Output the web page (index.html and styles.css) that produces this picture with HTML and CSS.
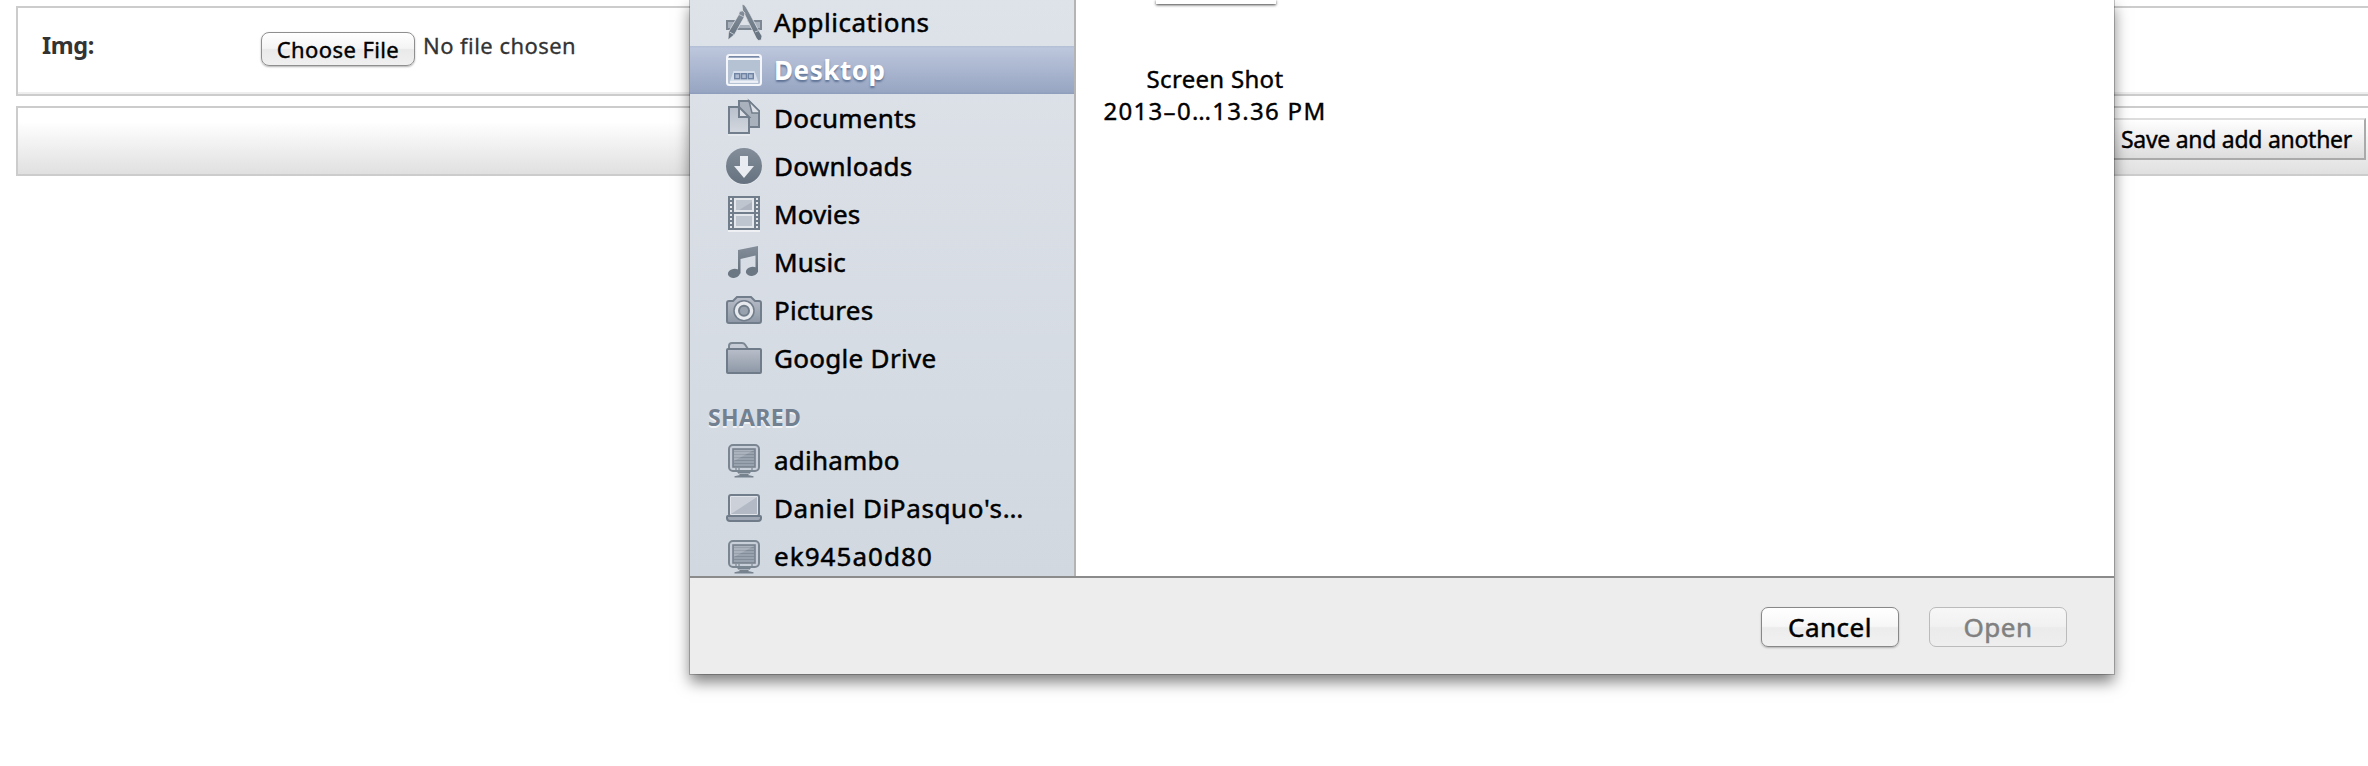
FILE: index.html
```html
<!DOCTYPE html>
<html lang="en">
<head>
<meta charset="utf-8">
<title>Add image</title>
<link rel="stylesheet" href="styles.css">
</head>
<body>
<svg class="defs" width="0" height="0" aria-hidden="true">
  <defs>
    <linearGradient id="dark" x1="0" y1="0" x2="0" y2="1"><stop offset="0" stop-color="#848e9b"/><stop offset="1" stop-color="#65717e"/></linearGradient>
    <linearGradient id="fill" x1="0" y1="0" x2="0" y2="1"><stop offset="0" stop-color="#b9bfca"/><stop offset="1" stop-color="#8d97a5"/></linearGradient>
    <linearGradient id="pale" x1="0" y1="0" x2="0" y2="1"><stop offset="0" stop-color="#b9c0cb"/><stop offset="1" stop-color="#d3d8df"/></linearGradient>
    <symbol id="monitor" viewBox="0 0 36 48">
      <rect x="3" y="9" width="30" height="26" rx="4" fill="#c9cfd8" stroke="#7b8693" stroke-width="2"/>
      <rect x="7" y="13" width="22" height="18" fill="#98a2af" stroke="#78838f" stroke-width="1.6"/>
      <path d="M8 15.500h20M8 18.500h20M8 21.500h20M8 24.500h20M8 27.500h20" stroke="#838d9a"/>
      <path d="M8 14h20L8 25z" fill="#fff" opacity=".18"/>
      <path d="M10 32v2M13 32v2M26 32v2" stroke="#7b8693" stroke-width="1.2"/>
      <path d="M11 36h14l-3 3 5.500 1.200V41.500H8.500V40.200L14 39z" fill="#77828f"/>
      <path d="M13 37.500h10" stroke="#aab2bd"/>
    </symbol>
  </defs>
</svg>

<main class="page">
  <section class="module">
    <label class="field-label">Img:</label>
    <button class="choose">Choose File</button>
    <span class="file-name">No file chosen</span>
  </section>
  <section class="submit-row">
    <button class="save">Save and add another</button>
  </section>
</main>

<div class="dialog">
  <div class="browser">
    <nav class="sidebar">
      <div class="row t-app">
        <svg class="icon" viewBox="0 0 36 48"><path d="M1 23h34v8H1z" fill="#a9b1bc" stroke="#7d8794" stroke-width="2"/><path d="M17.500 15l6 12H12z" fill="#dde1e8"/><path d="M16 6.500q2-1 4 2.500l4 7 7.500 14.500 4.500 7.500-.8 4-3 .5-2-2.500L16.500 12z" fill="url(#dark)" stroke="#e6e9ed" stroke-width=".7"/><path d="M13.500 13.500q3.500-2 5.500 1.500l-1 4.500L8.500 36.500 2 42l.5-8L12.500 17z" fill="url(#dark)" stroke="#e6e9ed" stroke-width=".7"/><path d="M13 16.500l5 2.500M3.500 34l4.500 2.500M29 34l5-2" stroke="#c3cad3"/></svg>
        <span>Applications</span>
      </div>
      <div class="row selected t-desk">
        <svg class="icon" viewBox="0 0 36 48"><rect x="1" y="9" width="34" height="30" rx="2.500" fill="#b4c2d4" stroke="#f4f6fa" stroke-width="2"/><path d="M3 10.700h30" stroke="#7688a5" stroke-width="1.400"/><path d="M2 13h32" stroke="#f4f6fa" stroke-width="2"/><path d="M7.500 25h21l4 11.500h-29z" fill="#d5deea"/><path d="M4 36h28" stroke="#f4f6fa" stroke-width="1.500"/><g fill="#aebbd0" stroke="#6f83a2" stroke-width="1.400"><rect x="8.700" y="27.700" width="5" height="5"/><rect x="15.500" y="27.700" width="5" height="5"/><rect x="22.300" y="27.700" width="5" height="5"/></g></svg>
        <span>Desktop</span>
      </div>
      <div class="row t-doc">
        <svg class="icon" viewBox="0 0 36 48"><path d="M13 7h10l10 10v16H13z" fill="#a9b1bd" stroke="#727e8b" stroke-width="2"/><path d="M23 7l10 10v2h-7z" fill="#dde1e7" stroke="#727e8b" stroke-width="1.500"/><path d="M3 13h9l11 11v15H3z" fill="url(#pale)" stroke="#727e8b" stroke-width="2"/><path d="M13 13v10h10z" fill="#dde1e7" stroke="#727e8b" stroke-width="2"/><path d="M2 41h22" stroke="#f0f2f5"/></svg>
        <span>Documents</span>
      </div>
      <div class="row t-down">
        <svg class="icon" viewBox="0 0 36 48"><circle cx="18" cy="24.700" r="18" fill="#edf0f3"/><circle cx="18" cy="24" r="18" fill="url(#dark)"/><path d="M14 14h8v10h6L18 36 8 24h6z" fill="#e9ecf0"/></svg>
        <span>Downloads</span>
      </div>
      <div class="row t-mov">
        <svg class="icon" viewBox="0 0 36 48"><path d="M2 41h32" stroke="#eef0f3" stroke-width="2"/><path d="M2 6h32v34H2z" fill="#727d8b"/><path d="M8 8h20v14H8zM8 24h20v14H8z" fill="#e3e7ec"/><path d="M10 10h16v10H10zM10 26h16v10H10z" fill="#bfc5cf"/><path d="M26 12v8H13z" fill="#adb4c0"/><path d="M5 8v31M31 8v31" stroke="#e3e7ec" stroke-width="2" stroke-dasharray="2 2"/></svg>
        <span>Movies</span>
      </div>
      <div class="row t-mus">
        <svg class="icon" viewBox="0 0 36 48"><path d="M12 12L32 8v25.500h-2.500V17.500L14.500 21v14.500H12z" fill="url(#dark)"/><ellipse cx="8" cy="35.300" rx="6.200" ry="4.500" transform="rotate(-12 8 35.300)" fill="#6c7784"/><ellipse cx="26" cy="33.300" rx="6.200" ry="4.500" transform="rotate(-12 26 33.300)" fill="#6c7784"/></svg>
        <span>Music</span>
      </div>
      <div class="row t-pic">
        <svg class="icon" viewBox="0 0 36 48"><path d="M3 15h4l4-4h14l4 4h4q2 0 2 2v18q0 2-2 2H3q-2 0-2-2V17q0-2 2-2z" fill="url(#fill)" stroke="#727d8b" stroke-width="2"/><circle cx="18" cy="24.700" r="10" fill="#e6e9ed" stroke="#727d8b" stroke-width="1.500"/><circle cx="18" cy="24.700" r="5" fill="#98a2ae" stroke="#727d8b" stroke-width="2"/></svg>
        <span>Pictures</span>
      </div>
      <div class="row t-goo">
        <svg class="icon" viewBox="0 0 36 48"><path d="M3 16v-4q0-3 3-3h10q2 0 3 1.500l3 4.500z" fill="#c6ccd5" stroke="#7c8794" stroke-width="2"/><rect x="1" y="15" width="34" height="24" rx="1" fill="url(#fill)" stroke="#6f7b88" stroke-width="2"/></svg>
        <span>Google Drive</span>
      </div>
      <h2 class="group">SHARED</h2>
      <div class="row t-adi">
        <svg class="icon"><use href="#monitor"/></svg>
        <span>adihambo</span>
      </div>
      <div class="row t-dan">
        <svg class="icon" viewBox="0 0 36 48"><rect x="3" y="11" width="30" height="21" rx="2" fill="#e0e4ea" stroke="#727d8b" stroke-width="2"/><path d="M5 13h26v17H5z" fill="#cbd0d9"/><path d="M31 13v17H5z" fill="#b3bac6"/><path d="M1 33q0-1 1-1h32q1 0 1 1v1q0 3-3 3H4q-3 0-3-3z" fill="#9fa8b4" stroke="#6f7b88" stroke-width="2"/></svg>
        <span>Daniel DiPasquo's…</span>
      </div>
      <div class="row t-ek">
        <svg class="icon"><use href="#monitor"/></svg>
        <span>ek945a0d80</span>
      </div>
    </nav>
    <div class="files">
      <div class="file">
        <div class="thumb"></div>
        <div class="line-a">Screen Shot</div>
        <div class="line-b">2013–0…13.36 PM</div>
      </div>
    </div>
  </div>
  <footer class="actions">
    <button class="btn cancel">Cancel</button>
    <button class="btn open" disabled>Open</button>
  </footer>
</div>
</body>
</html>
```
FILE: styles.css
```css
* { box-sizing: border-box; }
body {
  margin: 0;
  height: 766px;
  overflow: hidden;
  background: #fff;
  color: #000;
  font-family: "Noto Sans", "Open Sans", sans-serif;
}
button { font-family: inherit; margin: 0; white-space: nowrap; }
.defs { position: absolute; }

/* Form behind the sheet */
.page { padding: 6px 0 0 16px; }
.module {
  display: flex;
  align-items: flex-start;
  height: 90px;
  padding: 24px 0 0 24px;
  border: 2px solid #ccc;
  border-right: 0;
  box-shadow: inset 0 -2px #eee;
  color: #333;
}
.field-label {
  width: 219px;
  font-size: 23.5px;
  font-weight: 700;
  letter-spacing: -.4px;
  line-height: 26px;
}
.choose {
  width: 154px;
  height: 34px;
  padding: 0;
  border: 1.5px solid #8f8f8f;
  border-radius: 8px;
  background: linear-gradient(#fff, #f4f4f4 48%, #e9e9e9 52%, #f0f0f0);
  box-shadow: 0 1px 2px rgba(0, 0, 0, .3);
  color: #000;
  font-size: 22px;
  letter-spacing: .4px;
  line-height: 30px;
  -webkit-text-stroke: .4px;
}
.file-name {
  margin-left: 8px;
  font-size: 22px;
  letter-spacing: .45px;
  line-height: 26px;
  -webkit-text-stroke: .3px;
}
.submit-row {
  display: flex;
  justify-content: flex-end;
  align-items: flex-start;
  height: 70px;
  margin-top: 10px;
  padding: 10px 2px 0 0;
  border: 2px solid #ccc;
  border-right: 0;
  background: linear-gradient(#fff 20%, #e0e0e0);
}
.save {
  width: 264px;
  height: 42px;
  padding: 0 12px 0 0;
  border: 2px solid;
  border-color: #ddd #aaa #aaa #ddd;
  background: linear-gradient(#fff, #ddd);
  color: #000;
  font-size: 23px;
  letter-spacing: -.28px;
  line-height: 38px;
  text-align: right;
  -webkit-text-stroke: .4px;
}

/* File sheet */
.dialog {
  position: absolute;
  left: 690px;
  top: 0;
  width: 1424px;
  height: 674px;
  display: flex;
  flex-direction: column;
  box-shadow: 0 0 0 1px rgba(0, 0, 0, .22), 0 8px 14px rgba(0, 0, 0, .5);
}
.browser { display: flex; height: 576px; background: #fff; overflow: hidden; }
.sidebar {
  width: 386px;
  height: 578px;
  margin-top: -2px;
  border-right: 2px solid #b4b4b4;
  background: linear-gradient(#dee2e9, #d1d8e0);
}
.row {
  display: flex;
  align-items: center;
  height: 48px;
  padding-left: 36px;
  font-size: 26px;
  line-height: 48px;
  white-space: nowrap;
  -webkit-text-stroke: .5px;
}
.icon { width: 36px; height: 48px; margin-right: 12px; flex: none; }
.t-app { letter-spacing: .5px; }
.t-desk { letter-spacing: .55px; }
.t-doc, .t-down { letter-spacing: .25px; }
.t-mov, .t-mus { letter-spacing: .1px; }
.t-pic, .t-adi { letter-spacing: .2px; }
.t-goo { letter-spacing: .3px; }
.t-dan { letter-spacing: .63px; }
.t-ek { letter-spacing: 1.05px; }
.selected {
  background: linear-gradient(#b3bfd6, #bcc6dc 5%, #98a6c3 95%, #8c9cba);
  color: #fff;
  font-weight: 700;
  text-shadow: 0 2px 2px rgba(50, 75, 115, .6);
  -webkit-text-stroke: 0;
}
.group {
  height: 54px;
  margin: 0;
  padding: 11px 0 0 18px;
  color: #728090;
  font-size: 23px;
  font-weight: 700;
  letter-spacing: .35px;
  line-height: 48px;
  text-shadow: 0 2px #f0f3f6;
}
.files { flex: 1; padding-left: 22px; }
.file {
  width: 234px;
  text-align: center;
  font-size: 24px;
  line-height: 32px;
  white-space: nowrap;
  -webkit-text-stroke: .4px;
}
.line-a { letter-spacing: .3px; }
.line-b { letter-spacing: 1.3px; }
.thumb {
  width: 120px;
  height: 4px;
  margin: 0 auto 59px 58px;
  background: #fff;
  box-shadow: 0 1px 3px rgba(0, 0, 0, .75);
}
.actions {
  display: flex;
  justify-content: flex-end;
  align-items: flex-start;
  gap: 30px;
  height: 98px;
  padding: 29px 47px 0 0;
  border-top: 2px solid #8b8b8b;
  background: #ededed;
}
.btn {
  width: 138px;
  height: 40px;
  padding: 0;
  border: 1.5px solid #888;
  border-radius: 7px;
  background: linear-gradient(#fff, #f7f7f7 48%, #ececec 52%, #f1f1f1);
  box-shadow: 0 1px 2px rgba(0, 0, 0, .25);
  color: #000;
  font-size: 26px;
  letter-spacing: .5px;
  line-height: 34px;
  -webkit-text-stroke: .5px;
}
.open {
  border-color: #bbb;
  background: linear-gradient(#f7f7f7, #f1f1f1 48%, #ebebeb 52%, #eee);
  box-shadow: none;
  color: #808080;
}
```
